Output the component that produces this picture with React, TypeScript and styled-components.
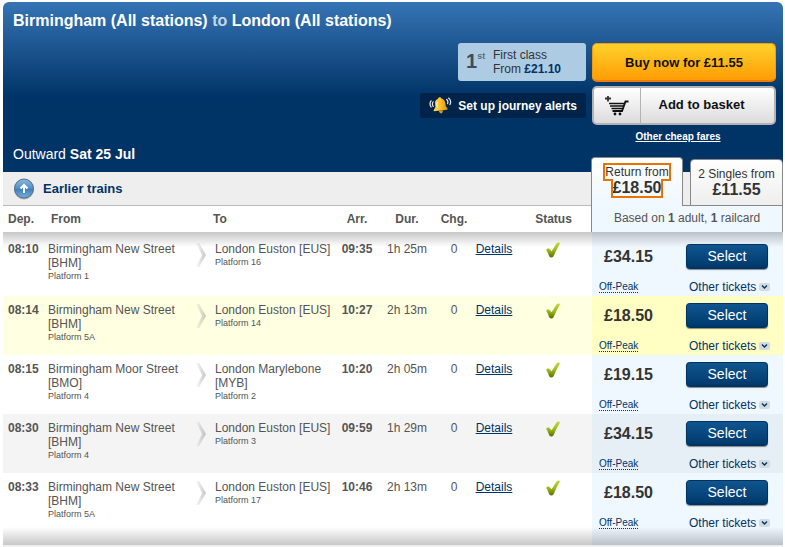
import React from "react";
import styled, { createGlobalStyle, css } from "styled-components";

const GlobalStyle = createGlobalStyle`
  *, *::before, *::after { box-sizing: border-box; }
  body {
    margin: 0;
    background: #fff;
    color: #555;
    font: 13px/14px "Liberation Sans", Arial, sans-serif;
  }
  button { font-family: inherit; cursor: pointer; }
`;

const Panel = styled.main`
  margin: 2px 2px 0 3px;
  min-width: 760px;
  border-bottom: 2px solid #eee;
`;

const Header = styled.header`
  display: grid;
  grid-template-columns: 1fr auto auto;
  column-gap: 6px;
  padding: 0 7px 0 10px;
  border-radius: 6px 6px 0 0;
  color: #fff;
  background: #036 linear-gradient(#3674b5, #036 96px) no-repeat;
`;

const Journey = styled.div`
  display: flex;
  flex-direction: column;
  justify-content: space-between;
  padding: 9px 0;
`;

const Title = styled.h1`
  margin: 0;
  font-size: 16px;
  line-height: 20px;
  white-space: nowrap;
`;

const TitleJoin = styled.span`
  color: #c3d8ec;
`;

const Outward = styled.p`
  margin: 0;
  font-size: 14px;
  line-height: 18px;
`;

const Offers = styled.div`
  display: flex;
  flex-direction: column;
  align-items: flex-end;
  gap: 12px;
  padding-top: 41px;
  width: 166px;
`;

const FirstClass = styled.a`
  display: flex;
  width: 128px;
  height: 38px;
  padding: 5px 8px;
  gap: 9px;
  border-radius: 3px;
  background: #aecbe4;
  color: #333;
  font-size: 12px;
  text-decoration: none;
  strong { color: #036; }
`;

const FirstMark = styled.span`
  display: flex;
  width: 18px;
  font-weight: bold;
  font-size: 20px;
  line-height: 26px;
  color: #3e4c5c;
  sup { font-size: 9px; line-height: 16px; color: #5b6c7d; }
`;

const Alerts = styled.button`
  display: flex;
  align-items: center;
  gap: 6px;
  width: 166px;
  height: 25px;
  padding: 0 9px;
  border: 0;
  border-radius: 3px;
  background: #002349;
  color: #fff;
  font-size: 12px;
  font-weight: bold;
  white-space: nowrap;
`;

const Actions = styled.div`
  display: flex;
  flex-direction: column;
  align-items: stretch;
  width: 184px;
  padding: 41px 0 28px;
`;

const BuyButton = styled.button`
  height: 39px;
  padding: 0;
  border: 1px solid #f90;
  border-bottom: 2px solid #f07f00;
  border-radius: 5px;
  background: linear-gradient(#ffd22b, #ff9c05);
  color: #111;
  font-size: 13px;
  font-weight: bold;
`;

const BasketButton = styled.button`
  display: flex;
  height: 39px;
  margin-top: 4px;
  padding: 0;
  border: 2px solid #b3b3b3;
  border-radius: 5px;
  background: linear-gradient(#fff, #dcdcdc);
  color: #111;
  font-size: 13px;
  font-weight: bold;
  line-height: 34px;
`;

const BasketIcon = styled.span`
  display: grid;
  place-items: center;
  width: 47px;
  height: 35px;
  border-right: 1px solid #b3b3b3;
`;

const BasketLabel = styled.span`
  flex: 1;
  padding-right: 12px;
`;

const CheapFares = styled.a`
  align-self: center;
  margin: 5px 12px 0 0;
  color: #fff;
  font-size: 10px;
  font-weight: bold;
`;

const Band = styled.div`
  display: flex;
  height: 34px;
`;

const EarlierBar = styled.div`
  flex: 1;
  display: flex;
  background: #eee;
  border-bottom: 1px solid #bbb;
`;

const EarlierButton = styled.button`
  display: flex;
  align-items: center;
  gap: 8px;
  padding: 0 10px;
  border: 0;
  background: none;
  color: #036;
  font-size: 13px;
  font-weight: bold;
`;

const Tabs = styled.div`
  display: flex;
  align-items: flex-end;
  justify-content: space-between;
  width: 192px;
  height: 49px;
  margin-top: -15px;
  background: linear-gradient(#eee, #eee) 0 15px no-repeat;
  box-shadow: inset 0 -1px #888;
`;

const Tab = styled.button<{ $active?: boolean }>`
  padding: 0;
  border: 1px solid #888;
  border-radius: 4px 4px 0 0;
  font-size: 12px;
  line-height: 16px;
  color: #333;
  text-align: center;
  white-space: nowrap;
  strong { font-size: 16px; }
  ${({ $active }) =>
    $active
      ? css`
          width: 92px;
          height: 49px;
          padding-bottom: 3px;
          border-bottom: 0;
          background: linear-gradient(#fff, #eff7ff);
        `
      : css`
          width: 93px;
          height: 47px;
          background: linear-gradient(#fff, #eee);
        `}
`;

const FocusText = styled.span<{ $on?: boolean }>`
  outline: ${({ $on }) => ($on ? "2px solid #e87400" : "none")};
`;

const Trains = styled.table`
  width: 100%;
  table-layout: fixed;
  border-collapse: separate;
  border-spacing: 0;
`;

const Col = styled.col<{ $w?: number }>`
  width: ${({ $w }) => ($w ? `${$w}px` : "auto")};
`;

const Th = styled.th<{ $align?: string; $indent?: number }>`
  height: 26px;
  padding: 0 0 0 ${({ $indent }) => $indent ?? 0}px;
  font-size: 12px;
  text-align: ${({ $align }) => $align ?? "left"};
  vertical-align: middle;
`;

const PassengersTh = styled.th`
  padding: 0 0 2px;
  border-right: 1px solid #888;
  box-shadow: -1px 0 #888;
  background: #eff7ff;
  font-size: 12px;
  font-weight: normal;
`;

type Tone = "plain" | "highlight" | "alt";
const tones: Record<Tone, [string, string]> = {
  plain: ["#fff", "#eff7ff"],
  highlight: ["#ffffe1", "#ffffc4"],
  alt: ["#f4f4f4", "#e6eef6"],
};

const Cell = styled.td<{ $align?: string }>`
  padding: 7px 0 0;
  vertical-align: top;
  text-align: ${({ $align }) => $align ?? "left"};
`;

const Row = styled.tr<{ $tone: Tone }>`
  height: 59px;
  ${Cell} {
    background-color: ${({ $tone }) => tones[$tone][0]};
  }
  ${Cell}:nth-last-child(-n + 2) {
    background-color: ${({ $tone }) => tones[$tone][1]};
  }
  &:first-child {
    height: 64px;
  }
  &:first-child ${Cell} {
    padding-top: 10px;
    background-image: linear-gradient(rgba(0, 0, 0, 0.22), transparent 15px);
  }
  &:first-child ${Cell}:nth-last-child(-n + 2) {
    padding-top: 12px;
  }
  &:last-child {
    height: 72px;
  }
  &:last-child ${Cell} {
    background-image: linear-gradient(to top, rgba(0, 0, 0, 0.22), transparent 18px);
  }
`;

const Time = styled.strong`
  font-size: 12px;
`;

const DepTime = styled(Time)`
  padding-left: 5px;
`;

const Station = styled.div`
  font-size: 12px;
`;

const Platform = styled.div`
  font-size: 9px;
  line-height: 12px;
`;

const Plain = styled.span`
  font-size: 12px;
`;

const DetailsLink = styled.a`
  color: #036;
  font-size: 12px;
`;

const Fare = styled.div`
  padding: 1px 0 0 12px;
  color: #333;
  font-size: 16px;
  font-weight: bold;
  line-height: 24px;
`;

const FareType = styled.a`
  display: inline-block;
  margin: 12px 0 0 7px;
  border-bottom: 1px dotted #036;
  color: #036;
  font-size: 10px;
  line-height: 11px;
  text-decoration: none;
`;

const FareActions = styled.div`
  display: flex;
  flex-direction: column;
  align-items: flex-start;
  gap: 11px;
  padding-left: 2px;
`;

const SelectButton = styled.button`
  width: 82px;
  height: 25px;
  padding: 0;
  border: 1px solid #003362;
  border-bottom-width: 2px;
  border-radius: 4px;
  background: linear-gradient(#10558f, #003a6d);
  box-shadow: 0 1px 1px rgba(0, 0, 0, 0.45);
  color: #fff;
  font-size: 14px;
`;

const OtherTickets = styled.button`
  display: flex;
  align-items: center;
  gap: 3px;
  padding: 0 0 0 3px;
  border: 0;
  background: none;
  color: #036;
  font-size: 12px;
  line-height: 14px;
  white-space: nowrap;
`;

const Bell = () => (
  <svg width="25" height="19" viewBox="0 0 25 19" aria-hidden="true">
    <defs>
      <linearGradient id="bell" x1="0" x2="1">
        <stop offset="0" stopColor="#ffd75a" />
        <stop offset="0.5" stopColor="#fbc02d" />
        <stop offset="1" stopColor="#d98b12" />
      </linearGradient>
    </defs>
    <g fill="none" stroke="#e8e8e8" strokeWidth="1.3" strokeLinecap="round">
      <path d="M4.500 5.500Q2.800 8 4.500 10.500M2.200 4.500Q0 7.500 2.200 11" />
      <path d="M19 3Q21 4.700 19.900 7.500M21 1.500Q24.500 4 22.500 8.500" />
    </g>
    <path d="M9.500 2.500C9.700 .4 12.800 .2 13.200 1.900C17 2.600 17.500 6 18 9.500C18.200 11.500 20.800 12 19.600 14L5.300 15.800C4.300 13.800 6.900 12.700 6.900 10.500C6.500 7 5.700 3.800 9.500 2.500Z" fill="url(#bell)" />
    <path d="M10.500 15.200L14.800 14.700C15.200 18.800 11.500 19.200 10.500 15.200Z" fill="#d9962a" />
    <path d="M8.800 5.500Q8.200 8 8.800 11.500" stroke="#fff0b0" fill="none" strokeWidth="1.200" />
  </svg>
);

const Cart = () => (
  <svg width="24" height="20" viewBox="0 0 24 20" fill="none" stroke="#111" aria-hidden="true">
    <path d="M0 2.500H6M3 0V5.500" strokeWidth="1.800" stroke="#333" />
    <path d="M23.500 5.500H20.500L17 15H7.500" strokeWidth="1.900" />
    <path d="M4 7.500H19M5 10H18M6.500 12.500H17" strokeWidth="1.700" />
    <circle cx="10" cy="18" r="1.400" fill="#111" stroke="none" />
    <circle cx="15" cy="18" r="1.400" fill="#111" stroke="none" />
  </svg>
);

const UpIcon = () => (
  <svg width="22" height="22" viewBox="0 0 22 22" aria-hidden="true">
    <defs>
      <linearGradient id="up" x1="0" y1="0" x2="0" y2="1">
        <stop offset="0" stopColor="#8bb8dc" />
        <stop offset="0.45" stopColor="#5a93c6" />
        <stop offset="0.55" stopColor="#4481bb" />
        <stop offset="1" stopColor="#70b0e5" />
      </linearGradient>
    </defs>
    <circle cx="11" cy="11.500" r="10" fill="#aaa" />
    <circle cx="11" cy="10.500" r="9.500" fill="url(#up)" stroke="#526f8b" />
    <path d="M11 15V8M7.500 10.500L11 7L14.500 10.500" fill="none" stroke="#fff" strokeWidth="2" />
  </svg>
);

const ArrowBox = styled.div`
  display: flex;
  justify-content: flex-end;
  padding: 1px 9px 0 0;
`;

const Chevron = ({ id }: { id: string }) => (
  <svg width="10" height="24" viewBox="0 0 10 24" aria-hidden="true">
    <defs>
      <linearGradient id={id} x1="0" x2="1">
        <stop offset="0" stopColor="#888" stopOpacity="0.05" />
        <stop offset="1" stopColor="#888" stopOpacity="0.48" />
      </linearGradient>
    </defs>
    <path d="M0 0H3L10 12L3 24H0L6 12Z" fill={`url(#${id})`} />
  </svg>
);

const Tick = () => (
  <svg width="14" height="16" viewBox="0 0 14 16" role="img" aria-label="On time">
    <defs>
      <linearGradient id="tick" x1="0" y1="0" x2="0" y2="1">
        <stop offset="0" stopColor="#c3d83c" />
        <stop offset="0.5" stopColor="#9dbb1c" />
        <stop offset="1" stopColor="#5c6e00" />
      </linearGradient>
    </defs>
    <path d="M13.900 1.500C13.700 .2 11.400 .3 10.500 1.400L5.600 9.300L3.500 6.900C2.500 5.900 .3 6.500 .2 8C1.600 10 2.500 12.500 3.300 14.400C4.200 15.900 6.500 15.900 7.400 14.400C9.300 10.300 11.400 6 13.900 1.500Z" fill="url(#tick)" />
  </svg>
);

const Drop = () => (
  <svg width="11" height="8" viewBox="0 0 11 8" aria-hidden="true">
    <rect width="11" height="8" rx="2" fill="#d3dae0" />
    <path d="M3 2.500L5.500 5L8 2.500" fill="none" stroke="#036" strokeWidth="1.400" />
  </svg>
);

const trains: {
  dep: string; from: string; code: string; fromPf: string;
  to: string; toPf: string; arr: string; dur: string; fare: string; tone: Tone;
}[] = [
  { dep: "08:10", from: "Birmingham New Street", code: "[BHM]", fromPf: "1", to: "London Euston [EUS]", toPf: "16", arr: "09:35", dur: "1h 25m", fare: "£34.15", tone: "plain" },
  { dep: "08:14", from: "Birmingham New Street", code: "[BHM]", fromPf: "5A", to: "London Euston [EUS]", toPf: "14", arr: "10:27", dur: "2h 13m", fare: "£18.50", tone: "highlight" },
  { dep: "08:15", from: "Birmingham Moor Street", code: "[BMO]", fromPf: "4", to: "London Marylebone [MYB]", toPf: "2", arr: "10:20", dur: "2h 05m", fare: "£19.15", tone: "plain" },
  { dep: "08:30", from: "Birmingham New Street", code: "[BHM]", fromPf: "4", to: "London Euston [EUS]", toPf: "3", arr: "09:59", dur: "1h 29m", fare: "£34.15", tone: "alt" },
  { dep: "08:33", from: "Birmingham New Street", code: "[BHM]", fromPf: "5A", to: "London Euston [EUS]", toPf: "17", arr: "10:46", dur: "2h 13m", fare: "£18.50", tone: "plain" },
];

export default function App() {
  return (
    <>
      <GlobalStyle />
      <Panel>
        <Header>
          <Journey>
            <Title>
              Birmingham (All stations) <TitleJoin>to</TitleJoin> London (All stations)
            </Title>
            <Outward>
              Outward <strong>Sat 25 Jul</strong>
            </Outward>
          </Journey>
          <Offers>
            <FirstClass href="#first">
              <FirstMark>1<sup>st</sup></FirstMark>
              <span>
                First class
                <br />
                From <strong>£21.10</strong>
              </span>
            </FirstClass>
            <Alerts>
              <Bell />
              Set up journey alerts
            </Alerts>
          </Offers>
          <Actions>
            <BuyButton>Buy now for £11.55</BuyButton>
            <BasketButton>
              <BasketIcon><Cart /></BasketIcon>
              <BasketLabel>Add to basket</BasketLabel>
            </BasketButton>
            <CheapFares href="#fares">Other cheap fares</CheapFares>
          </Actions>
        </Header>

        <Band>
          <EarlierBar>
            <EarlierButton>
              <UpIcon />
              Earlier trains
            </EarlierButton>
          </EarlierBar>
          <Tabs role="tablist">
            <Tab role="tab" aria-selected="true" $active>
              <FocusText $on>
                Return from
                <br />
                <strong>£18.50</strong>
              </FocusText>
            </Tab>
            <Tab role="tab" aria-selected="false">
              <FocusText>
                2 Singles from
                <br />
                <strong>£11.55</strong>
              </FocusText>
            </Tab>
          </Tabs>
        </Band>

        <Trains>
          <colgroup>
            <Col $w={45} />
            <Col />
            <Col $w={25} />
            <Col $w={120} />
            <Col $w={44} />
            <Col $w={56} />
            <Col $w={38} />
            <Col $w={42} />
            <Col $w={77} />
            <Col $w={92} />
            <Col $w={99} />
          </colgroup>
          <thead>
            <tr>
              <Th $indent={5}>Dep.</Th>
              <Th $indent={3}>From</Th>
              <Th $indent={23} colSpan={2}>To</Th>
              <Th $align="center">Arr.</Th>
              <Th $align="center">Dur.</Th>
              <Th $align="center">Chg.</Th>
              <Th />
              <Th $align="center">Status</Th>
              <PassengersTh colSpan={2}>
                Based on <strong>1</strong> adult, <strong>1</strong> railcard
              </PassengersTh>
            </tr>
          </thead>
          <tbody>
            {trains.map((t) => (
              <Row key={t.dep} $tone={t.tone}>
                <Cell><DepTime>{t.dep}</DepTime></Cell>
                <Cell>
                  <Station>{t.from}<br />{t.code}</Station>
                  <Platform>Platform {t.fromPf}</Platform>
                </Cell>
                <Cell><ArrowBox><Chevron id={`go-${t.dep.replace(":", "")}`} /></ArrowBox></Cell>
                <Cell>
                  <Station>{t.to}</Station>
                  <Platform>Platform {t.toPf}</Platform>
                </Cell>
                <Cell $align="center"><Time>{t.arr}</Time></Cell>
                <Cell $align="center"><Plain>{t.dur}</Plain></Cell>
                <Cell $align="center"><Plain>0</Plain></Cell>
                <Cell $align="center"><DetailsLink href="#details">Details</DetailsLink></Cell>
                <Cell $align="center"><Tick /></Cell>
                <Cell>
                  <Fare>{t.fare}</Fare>
                  <FareType href="#off-peak">Off-Peak</FareType>
                </Cell>
                <Cell>
                  <FareActions>
                    <SelectButton>Select</SelectButton>
                    <OtherTickets>Other tickets <Drop /></OtherTickets>
                  </FareActions>
                </Cell>
              </Row>
            ))}
          </tbody>
        </Trains>
      </Panel>
    </>
  );
}
